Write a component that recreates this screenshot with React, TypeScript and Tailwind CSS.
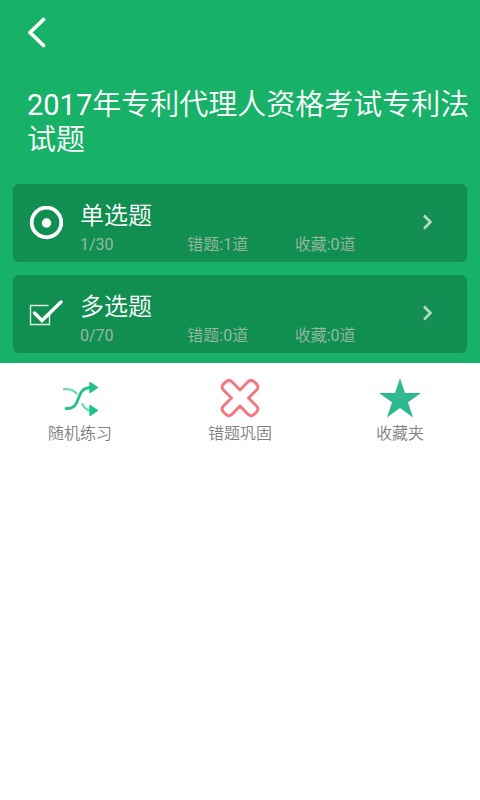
import type { ReactNode } from "react";

function RadioIcon() {
  return (
    <svg viewBox="0 0 34 34" className="h-[34px] w-[34px] shrink-0" fill="none" aria-hidden="true">
      <circle cx="17.500" cy="16.500" r="14.800" stroke="#fff" strokeWidth="3.800" />
      <circle cx="17.500" cy="17" r="4.700" fill="#fff" />
    </svg>
  );
}

function CheckIcon() {
  return (
    <svg viewBox="0 0 34 34" className="h-[34px] w-[34px] shrink-0" fill="none" aria-hidden="true">
      <path d="M19.500 8.500H1.500V27.500H20.500V16.500" stroke="#dcefe4" strokeWidth="1.400" />
      <path d="M5.500 16L13 23.500L32 5" stroke="#fff" strokeWidth="3.400" strokeLinecap="round" />
    </svg>
  );
}

function ShuffleIcon() {
  return (
    <svg viewBox="0 0 40 40" className="h-10 w-10" fill="none" aria-hidden="true">
      <path d="M4 11.300C10 10.500 13.500 12 16.500 15.500" stroke="#6fdbb5" strokeWidth="2.400" strokeLinecap="round" />
      <path d="M22 25.500C24 29.500 26.500 32 30 32.500" stroke="#6fdbb5" strokeWidth="2.400" />
      <path d="M6 30.500C23 31.500 14 10.500 30 9.500" stroke="#22c08b" strokeWidth="2.800" strokeLinecap="round" />
      <path d="M30 4.500L37.500 9.500L30 14.500Z M30 27.500L37.500 32.500L30 37.500Z" fill="#1fc08a" stroke="#1fc08a" strokeWidth="1.400" strokeLinejoin="round" />
    </svg>
  );
}

function CrossIcon() {
  return (
    <svg viewBox="0 0 40 40" className="h-10 w-10" fill="none" aria-hidden="true">
      <path
        d="M20 12L28 3.800Q31 .8 34 3.800L36.500 6.200Q39.500 9 36.500 12L28.500 20L36.500 28Q39.500 31 36.500 34L34 36.500Q31 39.200 28 36.200L20 28L12 36.200Q9 39.200 6 36.500L3.500 34Q.5 31 3.500 28L11.500 20L3.500 12Q.5 9 3.500 6.200L6 3.800Q9 .8 12 3.800Z"
        stroke="#f27880"
        strokeWidth="3"
        strokeLinejoin="round"
      />
    </svg>
  );
}

function StarIcon() {
  return (
    <svg viewBox="0 0 44 40" className="h-10 w-11" aria-hidden="true">
      <path d="M22 0L27 15H43L30 24.300L35 39.500L22 30L9 39.500L14 24.300L1 15H17Z" fill="#2fb98f" />
    </svg>
  );
}

type CardProps = { icon: ReactNode; title: string; progress: string; wrong: string; saved: string };

function QuestionCard({ icon, title, progress, wrong, saved }: CardProps) {
  return (
    <li className="flex h-[78px] items-center rounded-md bg-[#118f51] pr-[23px] pl-4">
      {icon}
      <div className="ml-[17px] flex-1 pt-[11px]">
        <h2 className="mb-0.5 text-2xl leading-[30px] text-white">{title}</h2>
        <div className="grid grid-cols-3 text-base leading-6 text-[#9ab7a4]">
          <span>{progress}</span>
          <span>{wrong}</span>
          <span>{saved}</span>
        </div>
      </div>
      <button type="button" aria-label={title} className="ml-2 flex h-[34px] w-[34px] items-center justify-center bg-[#158e56]">
        <svg viewBox="0 0 34 34" className="h-[34px] w-[34px]" fill="none" aria-hidden="true">
          <path d="M14 9.500L20.500 16L14 22.500" stroke="#b5dbc8" strokeWidth="2.600" />
        </svg>
      </button>
    </li>
  );
}

const actions = [
  { label: "随机练习", icon: <ShuffleIcon /> },
  { label: "错题巩固", icon: <CrossIcon /> },
  { label: "收藏夹", icon: <StarIcon /> },
];

export default function App() {
  return (
    <div className="min-h-screen bg-white font-[Roboto,'Noto_Sans_CJK_SC_DemiLight','Noto_Sans_CJK_SC',sans-serif]">
      <header className="bg-[#18b168] px-[13px] pb-2.5">
        <div className="flex h-16 items-center">
          <button type="button" aria-label="返回" className="ml-2 flex h-8 w-8 items-center justify-center">
            <svg viewBox="0 0 32 32" className="h-8 w-8" fill="none" aria-hidden="true">
              <path d="M22.500 3.500L9 16.500L22.500 29.500" stroke="#fff" strokeWidth="3.800" strokeLinecap="round" strokeLinejoin="round" />
            </svg>
          </button>
        </div>
        <h1 className="-mr-[13px] ml-[14px] pt-6 text-[29px] leading-[35px] text-white">
          2017年专利代理人资格考试专利法试题
        </h1>
        <ul className="mt-[26px] flex flex-col gap-[13px]">
          <QuestionCard icon={<RadioIcon />} title="单选题" progress="1/30" wrong="错题:1道" saved="收藏:0道" />
          <QuestionCard icon={<CheckIcon />} title="多选题" progress="0/70" wrong="错题:0道" saved="收藏:0道" />
        </ul>
      </header>
      <nav className="grid grid-cols-3 pt-[15px]">
        {actions.map(({ label, icon }) => (
          <button key={label} type="button" className="flex flex-col items-center gap-1 text-base leading-6 text-[#808080]">
            {icon}
            {label}
          </button>
        ))}
      </nav>
    </div>
  );
}
